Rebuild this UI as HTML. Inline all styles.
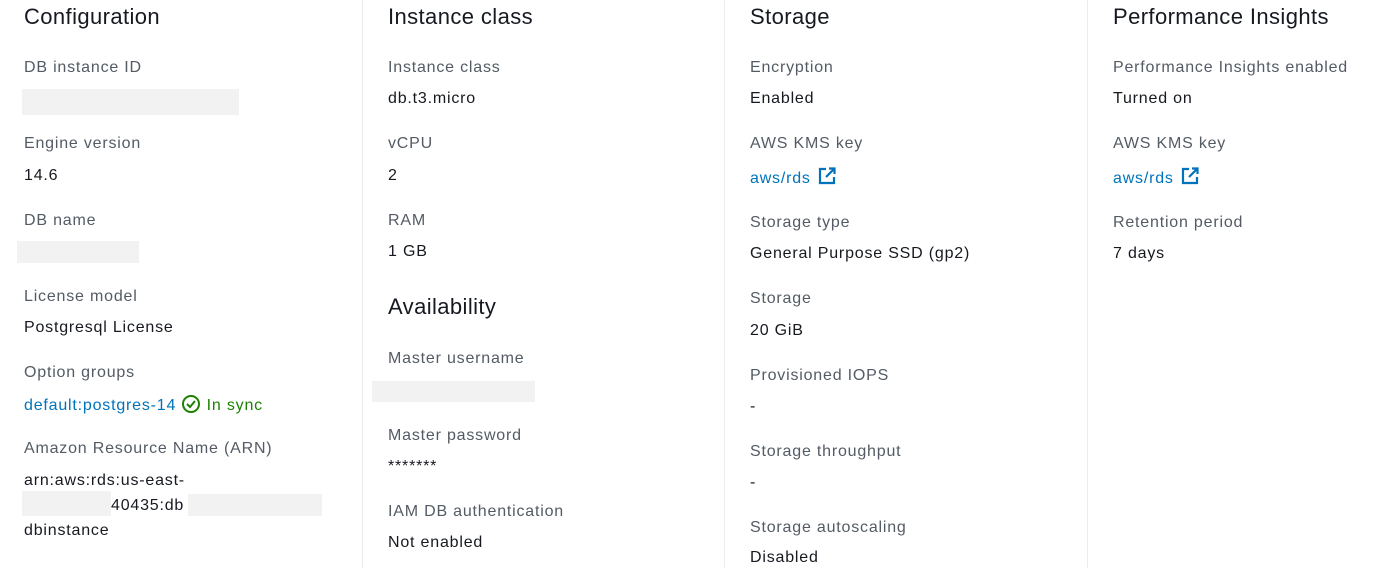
<!DOCTYPE html>
<html><head><meta charset="utf-8"><style>
body{margin:0;width:1393px;height:568px;background:#fff;position:relative;overflow:hidden;font-family:"Liberation Sans",sans-serif;}
.a{position:absolute;white-space:nowrap;line-height:20px;margin-top:1px;}
.h{font-size:22px;color:#16191f;line-height:28px;letter-spacing:0.4px;}
.l{font-size:16px;color:#545b64;letter-spacing:0.8px;}
.v{font-size:16px;color:#16191f;letter-spacing:0.8px;}
.k{font-size:16px;color:#0073bb;letter-spacing:0.8px;}
.g{position:absolute;background:#f2f2f2;}
.d{position:absolute;top:0;height:568px;width:1px;background:#eaeded;}
</style></head><body>
<div class="d" style="left:362px"></div><div class="d" style="left:724px"></div><div class="d" style="left:1087px"></div>

<div class="a h" style="left:24px;top:2px">Configuration</div>
<div class="a l" style="left:24px;top:57px">DB instance ID</div>
<div class="g" style="left:22px;top:89px;width:217px;height:26px"></div>
<div class="a l" style="left:24px;top:133px">Engine version</div>
<div class="a v" style="left:24px;top:165px">14.6</div>
<div class="a l" style="left:24px;top:210px">DB name</div>
<div class="g" style="left:17px;top:241px;width:122px;height:22px"></div>
<div class="a l" style="left:24px;top:286px">License model</div>
<div class="a v" style="left:24px;top:317px">Postgresql License</div>
<div class="a l" style="left:24px;top:362px">Option groups</div>
<div class="a k" style="left:24px;top:393px">default:postgres-14 <svg width="20" height="20" viewBox="0 0 20 20" style="vertical-align:-4px;margin-left:0px"><circle cx="10" cy="10" r="8" fill="none" stroke="#1d8102" stroke-width="2"/><path d="M6 10l3 3 5-6" fill="none" stroke="#1d8102" stroke-width="2"/></svg> <span style="color:#1d8102">In sync</span></div>
<div class="a l" style="left:24px;top:438px">Amazon Resource Name (ARN)</div>
<div class="a v" style="left:24px;top:470px">arn:aws:rds:us-east-</div>
<div class="g" style="left:22px;top:491px;width:89px;height:25px"></div>
<div class="a v" style="left:111px;top:495px">40435:db</div>
<div class="g" style="left:188px;top:494px;width:134px;height:22px"></div>
<div class="a v" style="left:24px;top:520px">dbinstance</div>

<div class="a h" style="left:388px;top:2px">Instance class</div>
<div class="a l" style="left:388px;top:57px">Instance class</div>
<div class="a v" style="left:388px;top:88px">db.t3.micro</div>
<div class="a l" style="left:388px;top:133px">vCPU</div>
<div class="a v" style="left:388px;top:165px">2</div>
<div class="a l" style="left:388px;top:210px">RAM</div>
<div class="a v" style="left:388px;top:241px">1 GB</div>
<div class="a h" style="left:388px;top:292px">Availability</div>
<div class="a l" style="left:388px;top:348px">Master username</div>
<div class="g" style="left:372px;top:381px;width:163px;height:21px"></div>
<div class="a l" style="left:388px;top:425px">Master password</div>
<div class="a v" style="left:388px;top:456px">*******</div>
<div class="a l" style="left:388px;top:501px">IAM DB authentication</div>
<div class="a v" style="left:388px;top:532px">Not enabled</div>

<div class="a h" style="left:750px;top:2px">Storage</div>
<div class="a l" style="left:750px;top:57px">Encryption</div>
<div class="a v" style="left:750px;top:88px">Enabled</div>
<div class="a l" style="left:750px;top:133px">AWS KMS key</div>
<div class="a k" style="left:750px;top:166px">aws/rds <svg width="18" height="18" viewBox="0 0 18 18" style="vertical-align:-2px;margin-left:2px"><path d="M8 2H2v14h14v-6" fill="none" stroke="#0073bb" stroke-width="2.2"/><path d="M11 1.5h5.5V7M16.5 1.5L8 10" fill="none" stroke="#0073bb" stroke-width="2.2"/></svg></div>
<div class="a l" style="left:750px;top:212px">Storage type</div>
<div class="a v" style="left:750px;top:243px">General Purpose SSD (gp2)</div>
<div class="a l" style="left:750px;top:288px">Storage</div>
<div class="a v" style="left:750px;top:320px">20 GiB</div>
<div class="a l" style="left:750px;top:365px">Provisioned IOPS</div>
<div class="a v" style="left:750px;top:396px">-</div>
<div class="a l" style="left:750px;top:441px">Storage throughput</div>
<div class="a v" style="left:750px;top:472px">-</div>
<div class="a l" style="left:750px;top:517px">Storage autoscaling</div>
<div class="a v" style="left:750px;top:547px">Disabled</div>

<div class="a h" style="left:1113px;top:2px">Performance Insights</div>
<div class="a l" style="left:1113px;top:57px">Performance Insights enabled</div>
<div class="a v" style="left:1113px;top:88px">Turned on</div>
<div class="a l" style="left:1113px;top:133px">AWS KMS key</div>
<div class="a k" style="left:1113px;top:166px">aws/rds <svg width="18" height="18" viewBox="0 0 18 18" style="vertical-align:-2px;margin-left:2px"><path d="M8 2H2v14h14v-6" fill="none" stroke="#0073bb" stroke-width="2.2"/><path d="M11 1.5h5.5V7M16.5 1.5L8 10" fill="none" stroke="#0073bb" stroke-width="2.2"/></svg></div>
<div class="a l" style="left:1113px;top:212px">Retention period</div>
<div class="a v" style="left:1113px;top:243px">7 days</div>
</body></html>
